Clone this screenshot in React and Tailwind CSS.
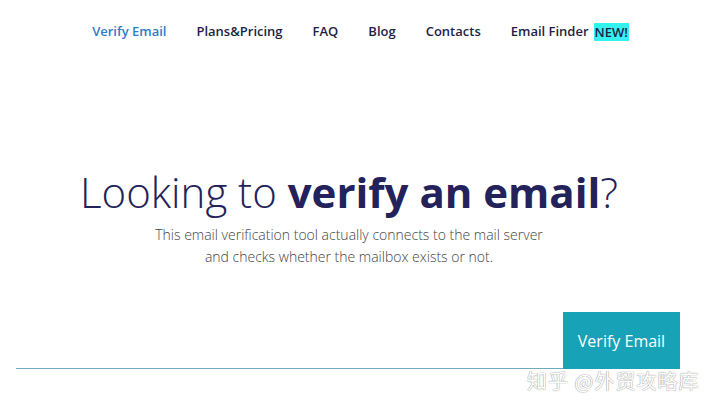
import React from "react";

export default function App() {
  const font = { fontFamily: '"Open Sans", "Noto Sans", sans-serif' };
  return (
    <div className="relative w-[720px] h-[409px] bg-white overflow-hidden" style={font}>
      <nav className="h-[62px] flex items-center justify-center gap-[30px] pl-[1px] pt-[2px] text-[13px] font-semibold text-[#1e1f45]">
        <a className="text-[#2f7cc4]">Verify Email</a>
        <a>Plans&amp;Pricing</a>
        <a>FAQ</a>
        <a>Blog</a>
        <a>Contacts</a>
        <span className="flex items-center gap-[5px]">
          <a>Email Finder</a>
          <span className="bg-[#33f2ee] px-[1px] leading-[18px]">NEW!</span>
        </span>
      </nav>
      <div className="flex flex-col items-center pr-[22px] mt-[103px]">
        <h1 className="text-[42px] leading-[54px] font-light text-[#23225a] whitespace-nowrap">
          Looking to <span className="font-bold">verify an email</span>?
        </h1>
        <p className="mt-[5px] text-[14px] leading-[22px] font-light text-[#444] text-center">
          This email verification tool actually connects to the mail server
          <br />
          and checks whether the mailbox exists or not.
        </p>
      </div>
      <div className="flex items-end pl-4 pr-[40px] mt-[44px]">
        <div className="flex-1 h-px bg-[#6fabc0]"></div>
        <button className="w-[117px] h-[57px] bg-[#17a2b8] text-white text-[16px]">
          Verify Email
        </button>
      </div>
      <div
        className="absolute left-[527px] top-[368px] text-[20px] leading-[26px] text-white tracking-[1px]"
        style={{
          fontFamily: '"Noto Sans CJK SC", sans-serif',
          textShadow: "0 0 1px #999, 0 0 1px #999",
        }}
      >
        知乎 @外贸攻略库
      </div>
    </div>
  );
}
